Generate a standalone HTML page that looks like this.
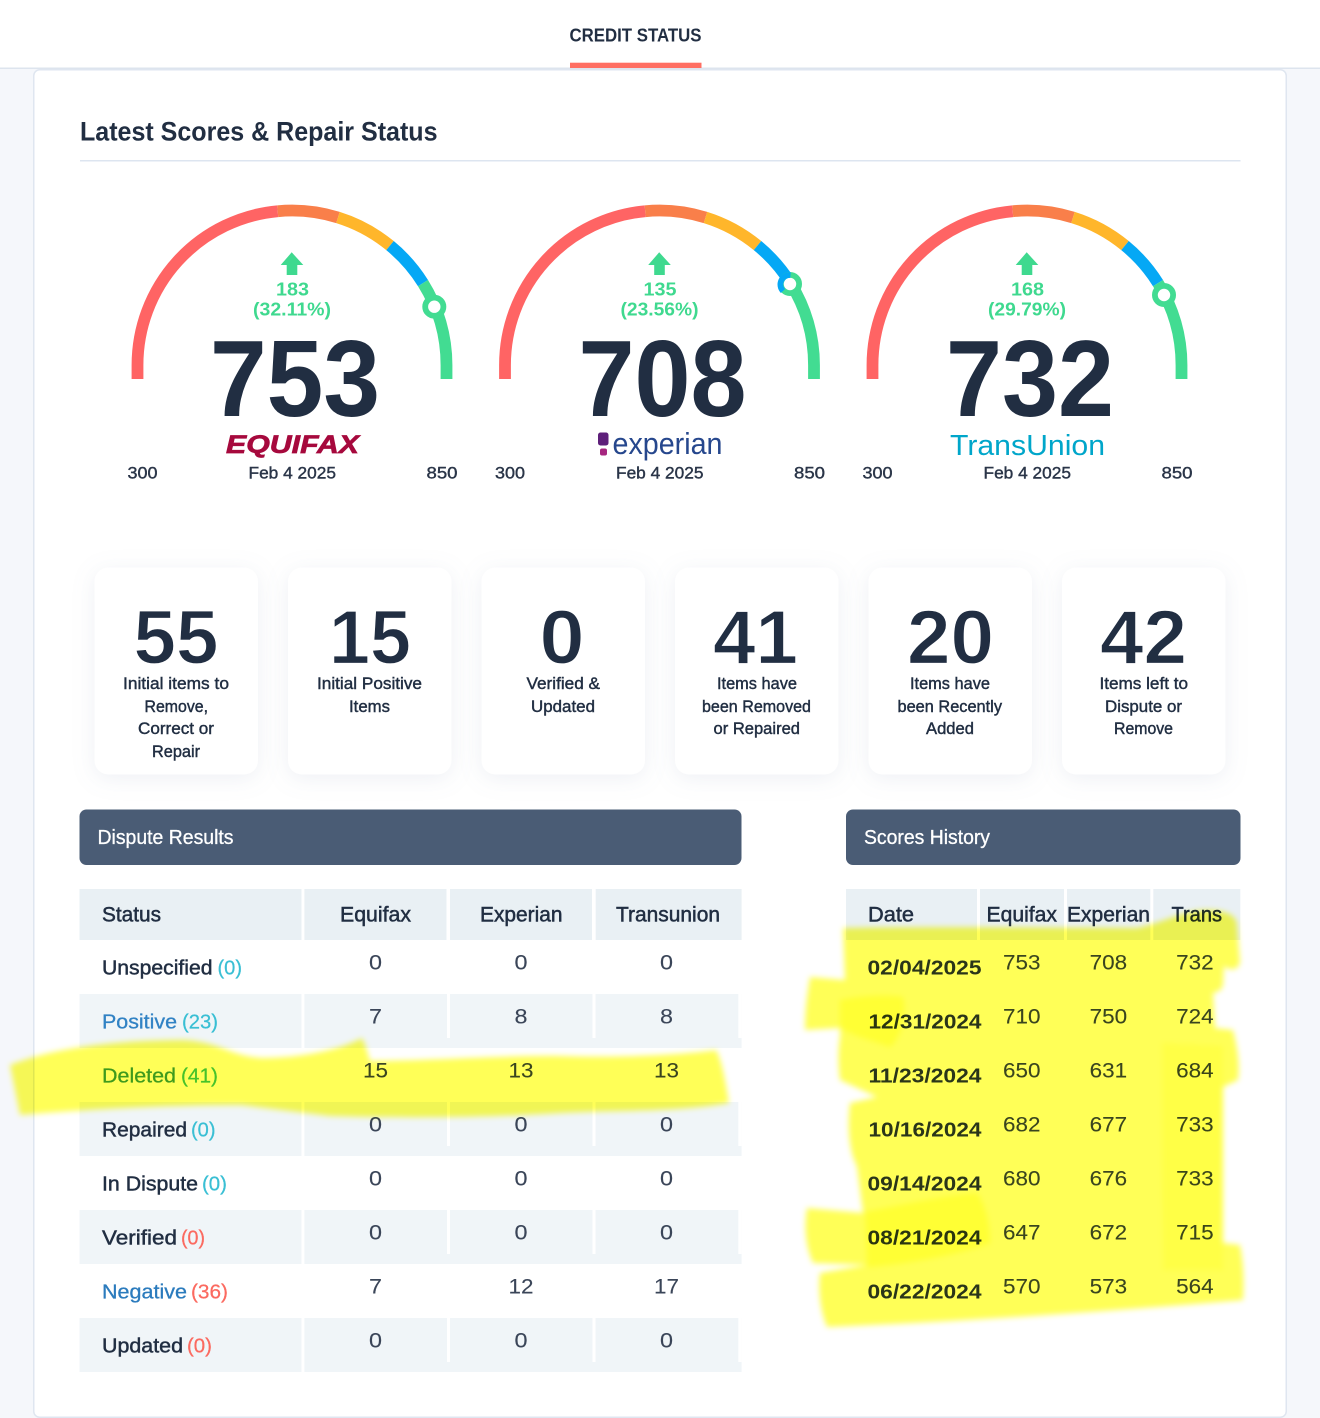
<!DOCTYPE html>
<html lang="en">
<head>
<meta charset="utf-8">
<title>Credit Status</title>
<style>
html,body{margin:0;padding:0;background:#f5f7fb}
svg{display:block}
text{font-family:"Liberation Sans",sans-serif;fill:#212e42;white-space:pre}
.b{font-weight:700}
.h{font-size:21.5px;stroke:#212e42;stroke-width:.5px}
.l{font-size:20.5px;stroke:#212e42;stroke-width:.45px}
.n{font-size:20.8px;fill:#3a4558;stroke:#3a4558;stroke-width:.1px}
.d{font-size:20px;font-weight:700;fill:#2a3548}
.c{font-size:16.8px;stroke:#212e42;stroke-width:.42px}
.s{font-size:76px;font-weight:700;stroke:#fff;stroke-width:1.2px}
.g{font-size:18.8px;font-weight:700;fill:#3fd98f}
.f{font-size:16.8px;stroke:#2a3548;stroke-width:.4px;fill:#2a3548}
.big{font-size:109px;font-weight:700}
.arc{fill:none;stroke-width:11.8}
.card{fill:#fff;filter:url(#sh)}
.teal{font-size:20.5px;fill:#3abfd4;stroke:#3abfd4;stroke-width:.25px}
.red{font-size:20.5px;fill:#fb6a60;stroke:#fb6a60;stroke-width:.25px}
</style>
</head>
<body>
<svg width="1320" height="1418" viewBox="0 0 1320 1418" xmlns="http://www.w3.org/2000/svg">
<defs>
<filter id="sh" x="-30%" y="-30%" width="160%" height="160%"><feDropShadow dx="0" dy="4" stdDeviation="11" flood-color="#8a9ab5" flood-opacity=".15"/></filter>
<filter id="bl" x="-5%" y="-5%" width="110%" height="110%"><feGaussianBlur stdDeviation="3"/></filter>
</defs>
<rect width="1320" height="1418" fill="#f5f7fb"/>
<rect width="1320" height="68" fill="#fff"/>
<rect y="67.5" width="1320" height="1.5" fill="#dde4ee"/>
<rect x="33.75" y="69.75" width="1252.5" height="1347.5" rx="6" fill="#fff" stroke="#dfe6f0" stroke-width="1.5"/>
<rect x="570" y="62.7" width="131.5" height="5.3" fill="#ff6f63"/>
<text x="569.5" y="41.7" font-size="18" class="b" textLength="132" lengthAdjust="spacingAndGlyphs">CREDIT STATUS</text>
<text x="80" y="140.7" font-size="27" class="b" textLength="357.5" lengthAdjust="spacingAndGlyphs">Latest Scores &amp; Repair Status</text>
<rect x="80" y="160" width="1160.5" height="1.5" fill="#dde5f0"/>

<!-- Gauge 1 -->
<g transform="translate(292 0)">
<path class="arc" stroke="#ff6464" d="M-154.5 379V365A154.5 154.5 0 0 1-14.3 211.2"/>
<path class="arc" stroke="#f97f4a" d="M-14.3 211.2A154.5 154.5 0 0 1 46 217.5"/>
<path class="arc" stroke="#ffb62b" d="M46 217.5A154.5 154.5 0 0 1 98 245.6"/>
<path class="arc" stroke="#05a8f5" d="M98 245.6A154.5 154.5 0 0 1 131 283.1"/>
<path class="arc" stroke="#42dc92" d="M131 283.1A154.5 154.5 0 0 1 154.5 365V379"/>
<circle cx="142.3" cy="306.7" r="9.1" fill="#fff" stroke="#42dc92" stroke-width="5.8"/>
<path fill="#3fd98f" d="M-.3 252.3L11.3 265H5.3V275H-5.3V265H-11.3Z"/>
<text x="-16" y="295.5" class="g" textLength="33" lengthAdjust="spacingAndGlyphs">183</text>
<text x="-39" y="315.5" class="g" textLength="78" lengthAdjust="spacingAndGlyphs">(32.11%)</text>
<text x="-82" y="416" class="big" textLength="170" lengthAdjust="spacingAndGlyphs">753</text>
<text x="-66" y="453" font-size="25" font-weight="700" font-style="italic" style="fill:#a6093d;stroke:#a6093d;stroke-width:.7px" textLength="133" lengthAdjust="spacingAndGlyphs">EQUIFAX</text>
<text x="-43.5" y="478.5" class="f" textLength="87.5" lengthAdjust="spacingAndGlyphs">Feb 4 2025</text>
<text x="-164.5" y="478.5" class="f" textLength="30" lengthAdjust="spacingAndGlyphs">300</text>
<text x="134.5" y="478.5" class="f" textLength="31" lengthAdjust="spacingAndGlyphs">850</text>
</g>

<!-- Gauge 2 -->
<g transform="translate(659.5 0)">
<path class="arc" stroke="#ff6464" d="M-154.5 379V365A154.5 154.5 0 0 1-14.3 211.2"/>
<path class="arc" stroke="#f97f4a" d="M-14.3 211.2A154.5 154.5 0 0 1 46 217.5"/>
<path class="arc" stroke="#ffb62b" d="M46 217.5A154.5 154.5 0 0 1 98 245.6"/>
<path class="arc" stroke="#05a8f5" d="M98 245.6A154.5 154.5 0 0 1 131 283.1"/>
<path class="arc" stroke="#42dc92" d="M131 283.1A154.5 154.5 0 0 1 154.5 365V379"/>
<circle cx="130.5" cy="284" r="9.1" fill="#fff" stroke="#42dc92" stroke-width="5.8"/>
<path fill="none" stroke="#05a8f5" stroke-width="5.8" d="M123.5 291A9.5 9.5 0 0 1 131 275"/>
<path fill="#3fd98f" d="M-.3 252.3L11.3 265H5.3V275H-5.3V265H-11.3Z"/>
<text x="-16" y="295.5" class="g" textLength="33" lengthAdjust="spacingAndGlyphs">135</text>
<text x="-39" y="315.5" class="g" textLength="78" lengthAdjust="spacingAndGlyphs">(23.56%)</text>
<text x="-81" y="416" class="big" textLength="168" lengthAdjust="spacingAndGlyphs">708</text>
<rect x="-61.5" y="432.5" width="10.5" height="13" rx="2.5" fill="#5e1f7a"/>
<rect x="-59.5" y="448.5" width="7" height="7" rx="2" fill="#a6267f"/>
<text x="-47" y="454" font-size="31" style="fill:#26478d" textLength="110" lengthAdjust="spacingAndGlyphs">experian</text>
<text x="-43.5" y="478.5" class="f" textLength="87.5" lengthAdjust="spacingAndGlyphs">Feb 4 2025</text>
<text x="-164.5" y="478.5" class="f" textLength="30" lengthAdjust="spacingAndGlyphs">300</text>
<text x="134.5" y="478.5" class="f" textLength="31" lengthAdjust="spacingAndGlyphs">850</text>
</g>

<!-- Gauge 3 -->
<g transform="translate(1027 0)">
<path class="arc" stroke="#ff6464" d="M-154.5 379V365A154.5 154.5 0 0 1-14.3 211.2"/>
<path class="arc" stroke="#f97f4a" d="M-14.3 211.2A154.5 154.5 0 0 1 46 217.5"/>
<path class="arc" stroke="#ffb62b" d="M46 217.5A154.5 154.5 0 0 1 98 245.6"/>
<path class="arc" stroke="#05a8f5" d="M98 245.6A154.5 154.5 0 0 1 131 283.1"/>
<path class="arc" stroke="#42dc92" d="M131 283.1A154.5 154.5 0 0 1 154.5 365V379"/>
<circle cx="137" cy="295" r="9.1" fill="#fff" stroke="#42dc92" stroke-width="5.8"/>
<path fill="#3fd98f" d="M-.3 252.3L11.3 265H5.3V275H-5.3V265H-11.3Z"/>
<text x="-16" y="295.5" class="g" textLength="33" lengthAdjust="spacingAndGlyphs">168</text>
<text x="-39" y="315.5" class="g" textLength="78" lengthAdjust="spacingAndGlyphs">(29.79%)</text>
<text x="-81" y="416" class="big" textLength="168" lengthAdjust="spacingAndGlyphs">732</text>
<text x="-77" y="455" font-size="29" style="fill:#00a6ca" textLength="155" lengthAdjust="spacingAndGlyphs">TransUnion</text>
<text x="-43.5" y="478.5" class="f" textLength="87.5" lengthAdjust="spacingAndGlyphs">Feb 4 2025</text>
<text x="-164.5" y="478.5" class="f" textLength="30" lengthAdjust="spacingAndGlyphs">300</text>
<text x="134.5" y="478.5" class="f" textLength="31" lengthAdjust="spacingAndGlyphs">850</text>
</g>

<!-- Stat cards -->
<rect class="card" x="94.5" y="567.5" width="163.5" height="207" rx="14"/>
<rect class="card" x="288" y="567.5" width="163.5" height="207" rx="14"/>
<rect class="card" x="481.5" y="567.5" width="163.5" height="207" rx="14"/>
<rect class="card" x="675" y="567.5" width="163.5" height="207" rx="14"/>
<rect class="card" x="868.5" y="567.5" width="163.5" height="207" rx="14"/>
<rect class="card" x="1062" y="567.5" width="163.5" height="207" rx="14"/>

<text x="133.5" y="663.5" class="s" textLength="85" lengthAdjust="spacingAndGlyphs">55</text>
<text x="329" y="663.5" class="s" textLength="82" lengthAdjust="spacingAndGlyphs">15</text>
<text x="539.5" y="663.5" class="s" textLength="45" lengthAdjust="spacingAndGlyphs">0</text>
<text x="713" y="663.5" class="s" textLength="85" lengthAdjust="spacingAndGlyphs">41</text>
<text x="907" y="663.5" class="s" textLength="87" lengthAdjust="spacingAndGlyphs">20</text>
<text x="1100" y="663.5" class="s" textLength="87" lengthAdjust="spacingAndGlyphs">42</text>

<text x="123" y="689" class="c" textLength="106" lengthAdjust="spacingAndGlyphs">Initial items to</text>
<text x="144.5" y="712" class="c" textLength="63.5" lengthAdjust="spacingAndGlyphs">Remove,</text>
<text x="138" y="734" class="c" textLength="76" lengthAdjust="spacingAndGlyphs">Correct or</text>
<text x="152" y="757" class="c" textLength="48" lengthAdjust="spacingAndGlyphs">Repair</text>

<text x="317" y="689" class="c" textLength="105" lengthAdjust="spacingAndGlyphs">Initial Positive</text>
<text x="349" y="712" class="c" textLength="41" lengthAdjust="spacingAndGlyphs">Items</text>

<text x="526.5" y="689" class="c" textLength="73.5" lengthAdjust="spacingAndGlyphs">Verified &amp;</text>
<text x="531" y="712" class="c" textLength="64" lengthAdjust="spacingAndGlyphs">Updated</text>

<text x="717" y="689" class="c" textLength="80" lengthAdjust="spacingAndGlyphs">Items have</text>
<text x="702" y="712" class="c" textLength="109" lengthAdjust="spacingAndGlyphs">been Removed</text>
<text x="713.5" y="734" class="c" textLength="86.5" lengthAdjust="spacingAndGlyphs">or Repaired</text>

<text x="910" y="689" class="c" textLength="80" lengthAdjust="spacingAndGlyphs">Items have</text>
<text x="897.5" y="712" class="c" textLength="104.5" lengthAdjust="spacingAndGlyphs">been Recently</text>
<text x="926" y="734" class="c" textLength="48" lengthAdjust="spacingAndGlyphs">Added</text>

<text x="1099.5" y="689" class="c" textLength="88.5" lengthAdjust="spacingAndGlyphs">Items left to</text>
<text x="1105" y="712" class="c" textLength="77" lengthAdjust="spacingAndGlyphs">Dispute or</text>
<text x="1114" y="734" class="c" textLength="59" lengthAdjust="spacingAndGlyphs">Remove</text>

<!-- Panel headers -->
<rect x="79.5" y="809.5" width="662" height="55.5" rx="7" fill="#4a5c75"/>
<rect x="846" y="809.5" width="394.5" height="55.5" rx="7" fill="#4a5c75"/>
<text x="97.5" y="844" font-size="20.5" style="fill:#fff;stroke:#fff;stroke-width:.3px" textLength="136" lengthAdjust="spacingAndGlyphs">Dispute Results</text>
<text x="864" y="844" font-size="20.5" style="fill:#fff;stroke:#fff;stroke-width:.3px" textLength="126" lengthAdjust="spacingAndGlyphs">Scores History</text>

<!-- Left table backgrounds -->
<g fill="#e9f0f4">
<rect x="79.5" y="889" width="222" height="51"/>
<rect x="304.4" y="889" width="142.1" height="51"/>
<rect x="450" y="889" width="142" height="51"/>
<rect x="595.7" y="889" width="145.9" height="51"/>
</g>
<g fill="#f0f5f8">
<rect x="79.5" y="994" width="222" height="54"/><rect x="304.4" y="994" width="437.2" height="54"/>
<rect x="79.5" y="1102" width="222" height="54"/><rect x="304.4" y="1102" width="437.2" height="54"/>
<rect x="79.5" y="1210" width="222" height="54"/><rect x="304.4" y="1210" width="437.2" height="54"/>
<rect x="79.5" y="1318" width="222" height="54"/><rect x="304.4" y="1318" width="437.2" height="54"/>
</g>
<g fill="#fff">
<rect x="447" y="994" width="3" height="44"/><rect x="592.5" y="994" width="3" height="44"/><rect x="738.3" y="994" width="3.4" height="44"/>
<rect x="447" y="1102" width="3" height="44"/><rect x="592.5" y="1102" width="3" height="44"/><rect x="738.3" y="1102" width="3.4" height="44"/>
<rect x="447" y="1210" width="3" height="44"/><rect x="592.5" y="1210" width="3" height="44"/><rect x="738.3" y="1210" width="3.4" height="44"/>
<rect x="447" y="1318" width="3" height="44"/><rect x="592.5" y="1318" width="3" height="44"/><rect x="738.3" y="1318" width="3.4" height="44"/>
</g>

<!-- Left table text -->
<text x="102" y="921.7" class="h" textLength="59" lengthAdjust="spacingAndGlyphs">Status</text>
<text x="340" y="921.7" class="h" textLength="71" lengthAdjust="spacingAndGlyphs">Equifax</text>
<text x="480" y="921.7" class="h" textLength="82.5" lengthAdjust="spacingAndGlyphs">Experian</text>
<text x="616" y="921.7" class="h" textLength="104" lengthAdjust="spacingAndGlyphs">Transunion</text>

<text x="102" y="974.5" class="l" textLength="110.5" lengthAdjust="spacingAndGlyphs">Unspecified</text>
<text x="217.5" y="974.5" class="teal" textLength="24.5" lengthAdjust="spacingAndGlyphs">(0)</text>
<text x="102" y="1028.5" font-size="20.5" style="fill:#3182c4;stroke:#3182c4;stroke-width:.3px" textLength="75" lengthAdjust="spacingAndGlyphs">Positive</text>
<text x="182" y="1028.5" class="teal" textLength="36" lengthAdjust="spacingAndGlyphs">(23)</text>
<text x="102" y="1082.5" font-size="20.5" style="fill:#3f9a52;stroke:#3f9a52;stroke-width:.3px" textLength="74" lengthAdjust="spacingAndGlyphs">Deleted</text>
<text x="181" y="1082.5" font-size="20.5" style="fill:#46c27a;stroke:#46c27a;stroke-width:.25px" textLength="37" lengthAdjust="spacingAndGlyphs">(41)</text>
<text x="102" y="1136.5" class="l" textLength="85" lengthAdjust="spacingAndGlyphs">Repaired</text>
<text x="191" y="1136.5" class="teal" textLength="24.5" lengthAdjust="spacingAndGlyphs">(0)</text>
<text x="102" y="1190.5" class="l" textLength="96" lengthAdjust="spacingAndGlyphs">In Dispute</text>
<text x="202" y="1190.5" class="teal" textLength="25" lengthAdjust="spacingAndGlyphs">(0)</text>
<text x="102" y="1244.5" class="l" textLength="75" lengthAdjust="spacingAndGlyphs">Verified</text>
<text x="181" y="1244.5" class="red" textLength="24" lengthAdjust="spacingAndGlyphs">(0)</text>
<text x="102" y="1298.5" font-size="20.5" style="fill:#2b7bbd;stroke:#2b7bbd;stroke-width:.3px" textLength="85" lengthAdjust="spacingAndGlyphs">Negative</text>
<text x="191" y="1298.5" class="red" textLength="37" lengthAdjust="spacingAndGlyphs">(36)</text>
<text x="102" y="1352.5" class="l" textLength="81" lengthAdjust="spacingAndGlyphs">Updated</text>
<text x="187" y="1352.5" class="red" textLength="25" lengthAdjust="spacingAndGlyphs">(0)</text>

<g>
<text class="n" x="369" y="969.7" textLength="13" lengthAdjust="spacingAndGlyphs">0</text><text class="n" x="514.5" y="969.7" textLength="13" lengthAdjust="spacingAndGlyphs">0</text><text class="n" x="660" y="969.7" textLength="13" lengthAdjust="spacingAndGlyphs">0</text>
<text class="n" x="369" y="1023.7" textLength="13" lengthAdjust="spacingAndGlyphs">7</text><text class="n" x="514.5" y="1023.7" textLength="13" lengthAdjust="spacingAndGlyphs">8</text><text class="n" x="660" y="1023.7" textLength="13" lengthAdjust="spacingAndGlyphs">8</text>
<text class="n" x="363" y="1077.7" textLength="25" lengthAdjust="spacingAndGlyphs">15</text><text class="n" x="508.5" y="1077.7" textLength="25" lengthAdjust="spacingAndGlyphs">13</text><text class="n" x="654" y="1077.7" textLength="25" lengthAdjust="spacingAndGlyphs">13</text>
<text class="n" x="369" y="1131.7" textLength="13" lengthAdjust="spacingAndGlyphs">0</text><text class="n" x="514.5" y="1131.7" textLength="13" lengthAdjust="spacingAndGlyphs">0</text><text class="n" x="660" y="1131.7" textLength="13" lengthAdjust="spacingAndGlyphs">0</text>
<text class="n" x="369" y="1185.7" textLength="13" lengthAdjust="spacingAndGlyphs">0</text><text class="n" x="514.5" y="1185.7" textLength="13" lengthAdjust="spacingAndGlyphs">0</text><text class="n" x="660" y="1185.7" textLength="13" lengthAdjust="spacingAndGlyphs">0</text>
<text class="n" x="369" y="1239.7" textLength="13" lengthAdjust="spacingAndGlyphs">0</text><text class="n" x="514.5" y="1239.7" textLength="13" lengthAdjust="spacingAndGlyphs">0</text><text class="n" x="660" y="1239.7" textLength="13" lengthAdjust="spacingAndGlyphs">0</text>
<text class="n" x="369" y="1293.7" textLength="13" lengthAdjust="spacingAndGlyphs">7</text><text class="n" x="508.5" y="1293.7" textLength="25" lengthAdjust="spacingAndGlyphs">12</text><text class="n" x="654" y="1293.7" textLength="25" lengthAdjust="spacingAndGlyphs">17</text>
<text class="n" x="369" y="1347.7" textLength="13" lengthAdjust="spacingAndGlyphs">0</text><text class="n" x="514.5" y="1347.7" textLength="13" lengthAdjust="spacingAndGlyphs">0</text><text class="n" x="660" y="1347.7" textLength="13" lengthAdjust="spacingAndGlyphs">0</text>
</g>

<!-- Right table -->
<g fill="#e9f0f4">
<rect x="846" y="889" width="131" height="51"/>
<rect x="980" y="889" width="84" height="51"/>
<rect x="1067" y="889" width="83.3" height="51"/>
<rect x="1153.3" y="889" width="87" height="51"/>
</g>
<text x="868" y="921.7" class="h" textLength="46" lengthAdjust="spacingAndGlyphs">Date</text>
<text x="986.5" y="921.7" class="h" textLength="70.5" lengthAdjust="spacingAndGlyphs">Equifax</text>
<text x="1067" y="921.7" class="h" textLength="83" lengthAdjust="spacingAndGlyphs">Experian</text>
<text x="1171.5" y="921.7" class="h" textLength="50.5" lengthAdjust="spacingAndGlyphs">Trans</text>

<g>
<text x="867.5" y="974.5" class="d" textLength="114" lengthAdjust="spacingAndGlyphs">02/04/2025</text>
<text x="868.5" y="1028.5" class="d" textLength="113" lengthAdjust="spacingAndGlyphs">12/31/2024</text>
<text x="868.5" y="1082.5" class="d" textLength="113" lengthAdjust="spacingAndGlyphs">11/23/2024</text>
<text x="868.5" y="1136.5" class="d" textLength="113" lengthAdjust="spacingAndGlyphs">10/16/2024</text>
<text x="867.5" y="1190.5" class="d" textLength="114" lengthAdjust="spacingAndGlyphs">09/14/2024</text>
<text x="867.5" y="1244.5" class="d" textLength="114" lengthAdjust="spacingAndGlyphs">08/21/2024</text>
<text x="867.5" y="1298.5" class="d" textLength="114" lengthAdjust="spacingAndGlyphs">06/22/2024</text>
</g>
<g>
<text class="n" x="1003" y="969.7" textLength="37.5" lengthAdjust="spacingAndGlyphs">753</text><text class="n" x="1089.6" y="969.7" textLength="37.5" lengthAdjust="spacingAndGlyphs">708</text><text class="n" x="1176.2" y="969.7" textLength="37.5" lengthAdjust="spacingAndGlyphs">732</text>
<text class="n" x="1003" y="1023.7" textLength="37.5" lengthAdjust="spacingAndGlyphs">710</text><text class="n" x="1089.6" y="1023.7" textLength="37.5" lengthAdjust="spacingAndGlyphs">750</text><text class="n" x="1176.2" y="1023.7" textLength="37.5" lengthAdjust="spacingAndGlyphs">724</text>
<text class="n" x="1003" y="1077.7" textLength="37.5" lengthAdjust="spacingAndGlyphs">650</text><text class="n" x="1089.6" y="1077.7" textLength="37.5" lengthAdjust="spacingAndGlyphs">631</text><text class="n" x="1176.2" y="1077.7" textLength="37.5" lengthAdjust="spacingAndGlyphs">684</text>
<text class="n" x="1003" y="1131.7" textLength="37.5" lengthAdjust="spacingAndGlyphs">682</text><text class="n" x="1089.6" y="1131.7" textLength="37.5" lengthAdjust="spacingAndGlyphs">677</text><text class="n" x="1176.2" y="1131.7" textLength="37.5" lengthAdjust="spacingAndGlyphs">733</text>
<text class="n" x="1003" y="1185.7" textLength="37.5" lengthAdjust="spacingAndGlyphs">680</text><text class="n" x="1089.6" y="1185.7" textLength="37.5" lengthAdjust="spacingAndGlyphs">676</text><text class="n" x="1176.2" y="1185.7" textLength="37.5" lengthAdjust="spacingAndGlyphs">733</text>
<text class="n" x="1003" y="1239.7" textLength="37.5" lengthAdjust="spacingAndGlyphs">647</text><text class="n" x="1089.6" y="1239.7" textLength="37.5" lengthAdjust="spacingAndGlyphs">672</text><text class="n" x="1176.2" y="1239.7" textLength="37.5" lengthAdjust="spacingAndGlyphs">715</text>
<text class="n" x="1003" y="1293.7" textLength="37.5" lengthAdjust="spacingAndGlyphs">570</text><text class="n" x="1089.6" y="1293.7" textLength="37.5" lengthAdjust="spacingAndGlyphs">573</text><text class="n" x="1176.2" y="1293.7" textLength="37.5" lengthAdjust="spacingAndGlyphs">564</text>
</g>

<!-- Highlighter -->
<g style="mix-blend-mode:multiply" filter="url(#bl)">
<g fill="#ffff00" opacity=".66">
<path d="M10 1065C60 1045 130 1040 184 1040C220 1042 230 1056 262 1058C300 1058 340 1050 362 1038C368 1050 372 1070 378 1090C350 1100 300 1108 250 1105C160 1105 80 1110 20 1115Z
M240 1060C400 1065 480 1055 560 1056C620 1058 680 1055 716 1050C722 1060 726 1085 729 1103C680 1112 620 1110 560 1113C480 1118 400 1118 330 1116L240 1105Z"/>
<path d="M843 928C950 926 1050 928 1137 928C1165 922 1185 910 1207 910C1225 910 1237 915 1237 925L1240 962C1238 972 1228 970 1224 966L1223 985C1222 990 1218 992 1213 993L1215 1028L1233 1030C1238 1050 1240 1065 1238 1080L1223 1087V1243L1240 1245C1244 1265 1244 1285 1243 1300C1100 1312 950 1322 827 1327C820 1310 818 1290 820 1273L867 1265L813 1263C805 1245 804 1225 807 1208L863 1213L857 1167L853 1157C848 1140 848 1120 850 1103L877 1097L840 1080C838 1065 838 1050 840 1037L840 1028L805 1030C805 1010 807 995 810 977L845 980L843 928Z"/>
</g>
<g fill="#ffff00" opacity=".4">
<path d="M840 1000C860 996 885 994 903 997C908 1015 900 1040 890 1047C870 1040 850 1035 840 1027Z"/>
<path d="M865 1212C900 1205 950 1195 977 1193C986 1205 990 1225 990 1243C960 1255 900 1265 867 1267Z"/>
</g>
<path fill="#ffff00" opacity=".2" d="M1162 1043L1223 1046V1270H1163Z"/>
</g>
</svg>
</body>
</html>
